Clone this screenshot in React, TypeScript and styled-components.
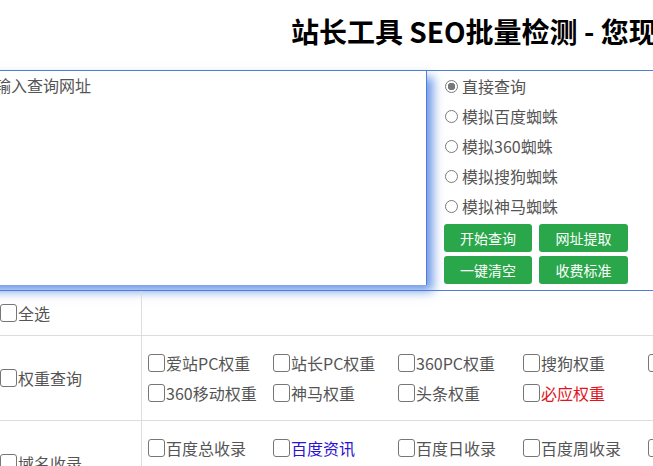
import styled, { createGlobalStyle } from "styled-components";

const GlobalStyle = createGlobalStyle`
  html, body {
    margin: 0;
    padding: 0;
    background: #fff;
    overflow: hidden;
  }
  body {
    font-family: "Noto Sans CJK SC", "Noto Sans", sans-serif;
    color: #555;
  }
`;

const Page = styled.div`
  margin-left: -26px;
  width: 1100px;
`;

const Title = styled.h1`
  margin: 0;
  height: 70px;
  padding-left: 317px;
  font-size: 28px;
  line-height: 62px;
  font-weight: bold;
  color: #000;
  white-space: nowrap;
`;

const TopRow = styled.div`
  display: flex;
  height: 219px;
  border-top: 1px solid #4f80d6;
  border-bottom: 1px solid #4f80d6;
`;

const UrlInput = styled.textarea`
  box-sizing: border-box;
  width: 453px;
  height: 214px;
  margin: 0;
  padding: 2px 5px;
  border: none;
  border-right: 1px solid #4f80d6;
  outline: none;
  resize: none;
  font-family: "Noto Sans CJK SC", sans-serif;
  font-size: 16px;
  line-height: 24px;
  box-shadow: 6px 6px 10px rgba(70, 125, 225, 0.8);
  &::placeholder {
    color: #555;
  }
`;

const Options = styled.div`
  display: flex;
  flex-direction: column;
  padding: 0 0 0 18px;
`;

const RadioRow = styled.label`
  display: flex;
  align-items: center;
  height: 30px;
  font-size: 16px;
  color: #555;
  white-space: nowrap;
`;

const Radio = styled.input.attrs({ type: "radio" })`
  appearance: none;
  box-sizing: border-box;
  width: 13px;
  height: 13px;
  margin: 0 4px 0 0;
  border: 1px solid #7a7a7a;
  border-radius: 50%;
  background: #fff;
  &:checked {
    background: radial-gradient(circle, #777 0 3.5px, #fff 4px);
  }
`;

const Buttons = styled.div`
  display: grid;
  grid-template-columns: 88px 89px;
  grid-auto-rows: 28px;
  gap: 4px 7px;
  margin: 3px 0 0 -1px;
`;

const GreenButton = styled.button`
  border: none;
  border-radius: 3px;
  background: #2aa74b;
  color: #fff;
  font-family: "Noto Sans CJK SC", sans-serif;
  font-size: 14px;
  padding: 0;
  cursor: pointer;
`;

const Table = styled.div`
  display: flex;
  flex-direction: column;
`;

const Row = styled.div<{ $h: number }>`
  display: grid;
  grid-template-columns: 168px 1fr;
  min-height: ${(p) => p.$h}px;
  border-bottom: 1px solid #ddd;
`;

const LabelCell = styled.label`
  display: flex;
  align-items: center;
  padding-left: 26px;
  border-right: 1px solid #ddd;
  font-size: 16px;
  color: #555;
`;

const Items = styled.div`
  display: grid;
  grid-template-columns: repeat(5, 125px);
  grid-auto-rows: 30px;
  align-content: start;
  padding: 12px 0 11px 6px;
`;

const Item = styled.label<{ $color?: string }>`
  display: flex;
  align-items: center;
  font-size: 16px;
  color: ${(p) => p.$color || "#555"};
  white-space: nowrap;
`;

const Check = styled.input.attrs({ type: "checkbox" })`
  appearance: none;
  box-sizing: border-box;
  width: 17px;
  height: 18px;
  margin: 0 1px 0 0;
  border: 1px solid #767676;
  border-radius: 3px;
  background: #fff;
  flex-shrink: 0;
`;

const modes = ["直接查询", "模拟百度蜘蛛", "模拟360蜘蛛", "模拟搜狗蜘蛛", "模拟神马蜘蛛"];
const actions = ["开始查询", "网址提取", "一键清空", "收费标准"];

type Opt = { name: string; color?: string };

const groups: { label: string; items: Opt[] }[] = [
  {
    label: "权重查询",
    items: [
      { name: "爱站PC权重" },
      { name: "站长PC权重" },
      { name: "360PC权重" },
      { name: "搜狗权重" },
      { name: "百度移动权重" },
      { name: "360移动权重" },
      { name: "神马权重" },
      { name: "头条权重" },
      { name: "必应权重", color: "#e0141e" },
    ],
  },
  {
    label: "域名收录",
    items: [
      { name: "百度总收录" },
      { name: "百度资讯", color: "#2a14d2" },
      { name: "百度日收录" },
      { name: "百度周收录" },
      { name: "百度月收录" },
      { name: "360收录" },
      { name: "搜狗收录" },
      { name: "神马收录" },
      { name: "头条收录" },
    ],
  },
];

export default function App() {
  return (
    <Page>
      <GlobalStyle />
      <Title>站长工具 SEO批量检测 - 您现在可以批量查询网站SEO信息</Title>
      <TopRow>
        <UrlInput placeholder="请输入查询网址" />
        <Options>
          {modes.map((m, i) => (
            <RadioRow key={m}>
              <Radio name="mode" defaultChecked={i === 0} />
              {m}
            </RadioRow>
          ))}
          <Buttons>
            {actions.map((a) => (
              <GreenButton key={a}>{a}</GreenButton>
            ))}
          </Buttons>
        </Options>
      </TopRow>
      <Table>
        <Row $h={44}>
          <LabelCell>
            <Check />
            全选
          </LabelCell>
          <div />
        </Row>
        {groups.map((g) => (
          <Row $h={84} key={g.label}>
            <LabelCell>
              <Check />
              {g.label}
            </LabelCell>
            <Items>
              {g.items.map((it) => (
                <Item key={it.name} $color={it.color}>
                  <Check />
                  {it.name}
                </Item>
              ))}
            </Items>
          </Row>
        ))}
      </Table>
    </Page>
  );
}
